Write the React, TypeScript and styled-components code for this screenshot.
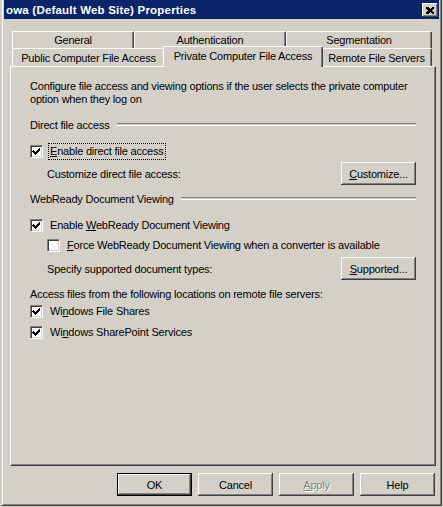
import styled, { createGlobalStyle, css } from 'styled-components';

const GlobalStyle = createGlobalStyle`
  html, body {
    margin: 0;
    padding: 0;
    background: #d4d0c8;
  }
  body {
    font-family: "Liberation Sans", Arial, sans-serif;
    font-size: 11px;
    color: #000;
  }
`;

const face = '#d4d0c8';
const shadow = '#808080';
const darkShadow = '#404040';

const Frame = styled.div`
  margin-left: 1px;
  width: 441px;
  height: 506px;
  box-sizing: border-box;
  border-left: 1px solid ${face};
  border-right: 1px solid ${darkShadow};
  border-bottom: 1px solid ${darkShadow};
  box-shadow: inset 1px 0 #fff, inset -1px -1px ${shadow};
  padding: 0 2px 2px 2px;
  background: ${face};
  display: flex;
  flex-direction: column;
`;

const TitleBar = styled.div`
  height: 19px;
  background: #0a246a;
  display: flex;
  align-items: center;
  justify-content: space-between;
  padding: 0 1px 0 2px;
`;

const Title = styled.span`
  color: #fff;
  font-weight: bold;
  font-size: 11.5px;
  letter-spacing: 0.2px;
`;

const CloseButton = styled.button`
  width: 16px;
  height: 14px;
  padding: 0;
  margin: 0;
  background: ${face};
  border: none;
  box-shadow: inset -1px -1px ${darkShadow}, inset 1px 1px #fff, inset -2px -2px ${shadow};
  display: flex;
  align-items: center;
  justify-content: center;
  margin-top: 1px;
`;

const Body = styled.div`
  padding: 12px 3px 0 6px;
  display: flex;
  flex-direction: column;
`;

const TabStrip = styled.div`
  padding-left: 2px;
  display: flex;
  flex-direction: column;
`;

const TabRow = styled.div<{ $height: number }>`
  display: flex;
  height: ${({ $height }) => $height}px;
  align-items: flex-start;
`;

const Tab = styled.div<{ $width: number; $selected?: boolean }>`
  box-sizing: border-box;
  width: ${({ $width }) => $width}px;
  height: 100%;
  flex-shrink: 0;
  background: ${face};
  border-top: 1px solid #fff;
  border-left: 1px solid #fff;
  border-right: 1px solid ${darkShadow};
  box-shadow: inset -1px 0 ${shadow};
  border-radius: 2px 2px 0 0;
  display: flex;
  align-items: center;
  justify-content: center;
  letter-spacing: -0.2px;
  white-space: nowrap;

  ${({ $selected }) =>
    $selected &&
    css`
      position: relative;
      z-index: 1;
      height: 21px;
      margin: -2px -2px 0 -2px;
      padding-bottom: 3px;
    `}
`;

const Panel = styled.div`
  box-sizing: border-box;
  height: 400px;
  border-top: 1px solid #fff;
  border-left: 1px solid #fff;
  border-right: 1px solid ${darkShadow};
  border-bottom: 1px solid ${darkShadow};
  box-shadow: inset -1px -1px ${shadow};
  padding: 13px 19px 0 19px;
  display: flex;
  flex-direction: column;
  letter-spacing: -0.2px;
`;

const Text = styled.div<{ $mt?: number; $indent?: number }>`
  line-height: 13px;
  margin-top: ${({ $mt = 0 }) => $mt}px;
  padding-left: ${({ $indent = 0 }) => $indent}px;
`;

const GroupHeader = styled.div<{ $mt: number }>`
  display: flex;
  align-items: center;
  height: 13px;
  margin-top: ${({ $mt }) => $mt}px;

  &::after {
    content: '';
    flex: 1;
    margin-left: 7px;
    height: 1px;
    border-top: 1px solid ${shadow};
    border-bottom: 1px solid #fff;
  }
`;

const CheckRow = styled.div<{ $mt: number; $indent?: number }>`
  display: flex;
  align-items: center;
  height: 17px;
  gap: 5px;
  margin-top: ${({ $mt }) => $mt}px;
  padding-left: ${({ $indent = 0 }) => $indent}px;
`;

const Box = styled.span`
  box-sizing: border-box;
  width: 13px;
  height: 13px;
  flex-shrink: 0;
  background: #fff;
  border-top: 1px solid ${shadow};
  border-left: 1px solid ${shadow};
  border-right: 1px solid #fff;
  border-bottom: 1px solid #fff;
  box-shadow: inset 1px 1px ${darkShadow}, inset -1px -1px ${face};
  display: flex;
`;

const CheckLabel = styled.span<{ $focused?: boolean }>`
  line-height: 13px;
  padding: 1px;
  border: 1px dotted ${({ $focused }) => ($focused ? '#000' : 'transparent')};
`;

const ActionRow = styled.div<{ $mt: number }>`
  display: flex;
  align-items: center;
  justify-content: space-between;
  height: 23px;
  margin-top: ${({ $mt }) => $mt}px;
  padding-left: 17px;

  & > span {
    padding-top: 1px;
  }
`;

const Button = styled.button<{ $default?: boolean }>`
  box-sizing: border-box;
  width: 75px;
  height: 23px;
  padding: 0;
  background: ${face};
  font-family: "Liberation Sans", Arial, sans-serif;
  font-size: 11px;
  letter-spacing: -0.2px;
  color: #000;
  border: none;
  box-shadow: inset -1px -1px ${darkShadow}, inset 1px 1px #fff, inset -2px -2px ${shadow};

  ${({ $default }) =>
    $default &&
    css`
      box-shadow: inset 0 0 0 1px #000, inset -2px -2px ${darkShadow}, inset 2px 2px #fff,
        inset -3px -3px ${shadow};
    `}

  &:disabled {
    color: ${shadow};
    text-shadow: 1px 1px #fff;
  }
`;

const ButtonBar = styled.div`
  display: flex;
  justify-content: flex-end;
  gap: 6px;
  margin-top: 7px;
  padding-right: 1px;
`;

const Key = styled.u`
  text-decoration-thickness: 1px;
  text-underline-offset: 1px;
`;

function CheckMark() {
  return (
    <svg width="11" height="11" viewBox="0 0 11 11" shapeRendering="crispEdges">
      <path d="M2 4h1v1h1v1h1v-1h1v-1h1v-1h1v-1h1v3h-1v1h-1v1h-1v1h-1v1h-1v-1h-1v-1h-1v-1h-1z" fill="#000" />
    </svg>
  );
}

function Checkbox({ checked }: { checked: boolean }) {
  return <Box>{checked && <CheckMark />}</Box>;
}

export default function App() {
  return (
    <>
      <GlobalStyle />
      <Frame>
        <TitleBar>
          <Title>owa (Default Web Site) Properties</Title>
          <CloseButton aria-label="Close">
            <svg width="8" height="7" viewBox="0 0 8 7" shapeRendering="crispEdges">
              <path d="M0 0h2l2 2l2-2h2v1l-2 2.5l2 2.5v1h-2l-2-2l-2 2h-2v-1l2-2.5l-2-2.5z" fill="#000" />
            </svg>
          </CloseButton>
        </TitleBar>
        <Body>
          <TabStrip>
            <TabRow $height={17}>
              <Tab $width={122}>General</Tab>
              <Tab $width={152}>Authentication</Tab>
              <Tab $width={146}>Segmentation</Tab>
            </TabRow>
            <TabRow $height={18}>
              <Tab $width={153}>Public Computer File Access</Tab>
              <Tab $width={160} $selected>
                Private Computer File Access
              </Tab>
              <Tab $width={111}>Remote File Servers</Tab>
            </TabRow>
          </TabStrip>
          <Panel>
            <Text>
              Configure file access and viewing options if the user selects the private computer
              <br />
              option when they log on
            </Text>
            <GroupHeader $mt={12}>Direct file access</GroupHeader>
            <CheckRow $mt={12}>
              <Checkbox checked />
              <CheckLabel $focused>
                <Key>E</Key>nable direct file access
              </CheckLabel>
            </CheckRow>
            <ActionRow $mt={2}>
              <span>Customize direct file access:</span>
              <Button>
                <Key>C</Key>ustomize...
              </Button>
            </ActionRow>
            <GroupHeader $mt={7}>WebReady Document Viewing</GroupHeader>
            <CheckRow $mt={12}>
              <Checkbox checked />
              <CheckLabel>
                Enable <Key>W</Key>ebReady Document Viewing
              </CheckLabel>
            </CheckRow>
            <CheckRow $mt={3} $indent={17}>
              <Checkbox checked={false} />
              <CheckLabel>
                <Key>F</Key>orce WebReady Document Viewing when a converter is available
              </CheckLabel>
            </CheckRow>
            <ActionRow $mt={3}>
              <span>Specify supported document types:</span>
              <Button>
                <Key>S</Key>upported...
              </Button>
            </ActionRow>
            <Text $mt={8}>Access files from the following locations on remote file servers:</Text>
            <CheckRow $mt={2}>
              <Checkbox checked />
              <CheckLabel>
                Wi<Key>n</Key>dows File Shares
              </CheckLabel>
            </CheckRow>
            <CheckRow $mt={4}>
              <Checkbox checked />
              <CheckLabel>
                Wi<Key>n</Key>dows SharePoint Services
              </CheckLabel>
            </CheckRow>
          </Panel>
          <ButtonBar>
            <Button $default>OK</Button>
            <Button>Cancel</Button>
            <Button disabled>
              <Key>A</Key>pply
            </Button>
            <Button>Help</Button>
          </ButtonBar>
        </Body>
      </Frame>
    </>
  );
}
